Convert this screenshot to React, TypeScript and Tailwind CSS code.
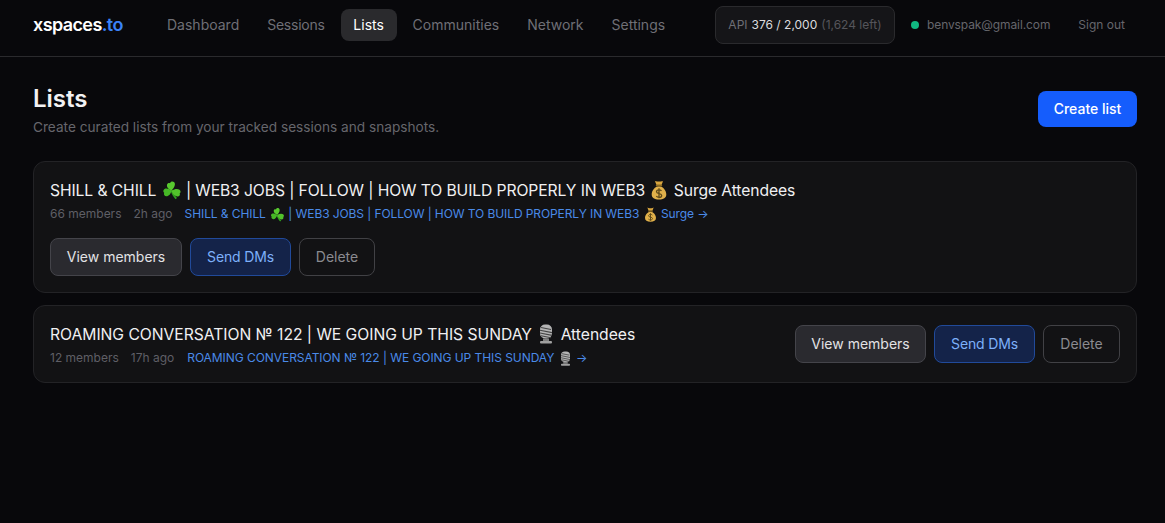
const nav = ["Dashboard", "Sessions", "Lists", "Communities", "Network", "Settings"];

function Clover({ s = 20 }: { s?: number }) {
  return (
    <svg width={s} height={s} viewBox="0 0 20 20" className="inline-block align-[-4px] ml-px">
      <path d="M9.500 10c1.500 3 3 5.500 5.500 8l-1.500 1.200C11 16.500 9.500 13.500 8.500 10.500z" fill="#2f9e1f" />
      <path d="M9.500 10.500C7 9.500 4.500 7.500 5 4.800 5.300 3 7 2.600 8 3.200 8.500 1.500 10.500.8 12 2c1.800 1.500 1 5-2.500 8.500z" fill="#58c92f" />
      <path d="M9.500 10.500C7.500 9 4.500 7.800 2.500 9c-1.600 1-1.500 3 -.3 3.800-.8 1.500.2 3.500 2.200 3.500 2.400 0 4.600-2.500 5.100-5.800z" fill="#46b826" />
      <path d="M9.500 10.500c3-1.500 6-2.300 8-.8 1.500 1.100 1.300 2.900.2 3.600.8 1.600-.4 3.500-2.500 3.200-2.800-.4-5-3-5.700-6z" fill="#52c22b" />
    </svg>
  );
}

function Bag({ s = 20 }: { s?: number }) {
  return (
    <svg width={s} height={s} viewBox="0 0 20 20" className="inline-block align-[-4px]">
      <path d="M10 6.200c-4 0-7.300 4.300-7.300 8.300 0 3.500 2.800 5 7.300 5s7.300-1.500 7.300-5c0-4-3.300-8.300-7.300-8.300z" fill="#e0b04a" />
      <path d="M5.800.8c1 .8 2.500.7 4.200.7s3.200.1 4.200-.7L12.500 5h-5z" fill="#d9a63f" />
      <rect x="6.800" y="4.600" width="6.400" height="1.800" rx=".9" fill="#8a6a22" />
      <path d="M12.500 10.800c-.6-.7-1.500-1-2.500-1-1.400 0-2.500.7-2.500 1.900 0 2.500 5.200 1.300 5.200 3.700 0 1.200-1.200 1.900-2.700 1.900-1.100 0-2.100-.4-2.700-1.100M10 8.300v10" fill="none" stroke="#5e4a1a" strokeWidth="1.300" />
    </svg>
  );
}

function Mic({ s = 20 }: { s?: number }) {
  return (
    <svg width={s} height={s} viewBox="0 0 20 20" className="inline-block align-[-4px]">
      <rect x="4" y="0.500" width="12" height="14" rx="5" fill="#b5b5b5" />
      <path d="M5 3.500l10 2M4 6.200l12 2.400M4 9l12 2.400M5 11.800l10 2" stroke="#454545" strokeWidth="1.100" />
      <rect x="7" y="14.500" width="6" height="2.500" fill="#808080" />
      <rect x="4" y="17" width="12" height="2.600" rx="1" fill="#a0a0a0" />
    </svg>
  );
}

function Actions({ second = false }: { second?: boolean }) {
  return (
    <div className="flex gap-2">
      <button className={second ? "h-[38px] w-[131px] rounded-lg border border-[#44444a] bg-[#2a2a2f] text-[#e2e2e5] text-sm" : "h-[38px] w-[132px] rounded-lg border border-[#44444a] bg-[#2a2a2f] text-[#e2e2e5] text-sm"}>View members</button>
      <button className="h-[38px] w-[101px] rounded-lg border border-[#214a9a] bg-[#142349] text-[#7db0fa] text-sm tracking-[-0.15px]">Send DMs</button>
      <button className={second ? "h-[38px] w-[77px] rounded-lg border border-[#414145] bg-transparent text-[#8b8b90] text-sm" : "h-[38px] w-[76px] rounded-lg border border-[#414145] bg-transparent text-[#8b8b90] text-sm"}>Delete</button>
    </div>
  );
}

export default function App() {
  return (
    <div className="min-h-[523px] bg-[#08080b] font-['Inter',sans-serif] text-white">
      <header className="h-[57px] flex items-center border-b border-[#2a2a2d] pl-[33px] pr-[40px] pb-[7px]">
        <div className="text-lg tracking-[-0.6px] font-semibold w-[122px]">
          xspaces<span className="text-[#3b82f6]">.to</span>
        </div>
        <nav className="flex gap-1">
          {nav.map((n) => (
            <a
              key={n}
              className={
                n === "Lists"
                  ? "h-8 w-14 justify-center flex items-center rounded-lg bg-[#2a2a2d] text-sm text-white"
                  : n === "Sessions"
                    ? "h-8 px-3 flex items-center rounded-lg text-sm text-[#6f6f76] tracking-[-0.25px]"
                    : "h-8 px-3 flex items-center rounded-lg text-sm text-[#6f6f76]"
              }
            >
              {n}
            </a>
          ))}
        </nav>
        <div className="ml-auto flex items-center">
          <div className="h-[38px] w-[180px] pt-px flex items-center justify-center gap-1 rounded-lg border border-[#2a2a2d] bg-[#151518] text-xs">
            <span className="text-[#6f6f76]">API</span>
            <span className="text-[#dcdcdf]">376 / 2,000</span>
            <span className="text-[#55555b]">(1,624 left)</span>
          </div>
          <span className="ml-4 w-2 h-2 rounded-full bg-[#10b981]" />
          <span className="ml-2 text-xs text-[#66666c] tracking-[-0.1px]">benvspak@gmail.com</span>
          <span className="ml-7 text-xs text-[#66666c]">Sign out</span>
        </div>
      </header>
      <main className="pr-[28px] pl-[33px] pt-[26px]">
        <div className="flex items-start justify-between">
          <div>
            <h1 className="text-2xl font-semibold text-[#f2f2f3] leading-8">Lists</h1>
            <p className="mt-[2px] text-[13.65px] leading-5 text-[#66666c]">Create curated lists from your tracked sessions and snapshots.</p>
          </div>
          <button className="mt-2 h-9 w-[99px] rounded-lg bg-[#155dfc] text-sm font-medium text-white">Create list</button>
        </div>
        <div className="mt-[24px] flex flex-col gap-3">
          <section className="h-[132px] rounded-xl border border-[#232326] bg-[#121214] px-4 pt-[17px]">
            <div className="text-[15.68px] leading-6 text-[#f0f0f2] tracking-[-0.1px]">
              SHILL &amp; CHILL <Clover /> | WEB3 JOBS | FOLLOW | HOW TO BUILD PROPERLY IN WEB3 <Bag /> Surge Attendees
            </div>
            <div className="mt-[3px] flex gap-3 text-xs leading-4">
              <span className="text-[#5f5f66]">66 members</span>
              <span className="text-[#5f5f66]">2h ago</span>
              <span className="text-[#4a8ae8] tracking-[-0.09px]">
                SHILL &amp; CHILL <Clover s={15} /> | WEB3 JOBS | FOLLOW | HOW TO BUILD PROPERLY IN WEB3 <Bag s={15} /> Surge →
              </span>
            </div>
            <div className="mt-4">
              <Actions />
            </div>
          </section>
          <section className="h-[78px] rounded-xl border border-[#232326] bg-[#121214] px-4 flex items-center justify-between">
            <div className="pt-px">
              <div className="text-[15.68px] leading-6 text-[#f0f0f2] tracking-[-0.03px]">
                ROAMING CONVERSATION № 122 | WE GOING UP THIS SUNDAY <Mic /> Attendees
              </div>
              <div className="mt-[3px] flex gap-3 text-xs leading-4">
                <span className="text-[#5f5f66]">12 members</span>
                <span className="text-[#5f5f66]">17h ago</span>
                <span className="ml-px text-[#4a8ae8] tracking-[-0.06px]">
                  ROAMING CONVERSATION № 122 | WE GOING UP THIS SUNDAY <Mic s={15} /> →
                </span>
              </div>
            </div>
            <Actions second />
          </section>
        </div>
      </main>
    </div>
  );
}
